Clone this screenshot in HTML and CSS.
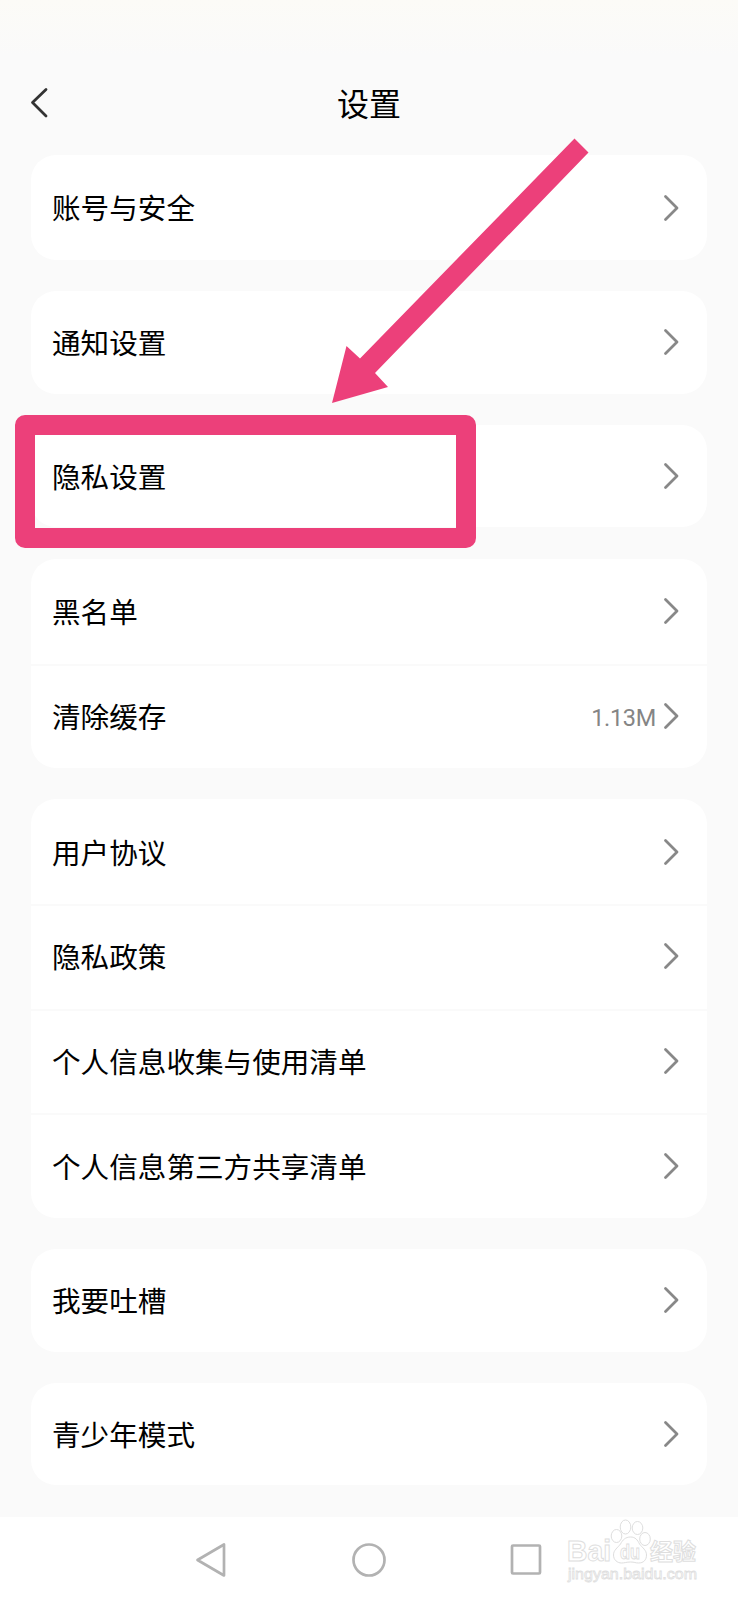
FILE: index.html
```html
<!DOCTYPE html>
<html lang="zh-CN">
<head>
<meta charset="utf-8">
<title>设置</title>
<link rel="stylesheet" href="styles.css">
</head>
<body>
<svg class="defs" aria-hidden="true"><symbol id="chev" viewBox="0 0 17 28"><path d="M2.5 2.5 14 14 2.5 25.5"/></symbol></svg>
<div class="screen">
  <div class="status"></div>
  <header class="header">
    <svg class="back" viewBox="0 0 20 32"><path d="M17 2.500 3.500 15.500 17 29"/></svg>
    <h1 class="title">设置</h1>
  </header>
  <main class="list">
    <section class="card first"><div class="row"><span class="label">账号与安全</span><svg class="chev"><use href="#chev"/></svg></div></section>
    <section class="card"><div class="row"><span class="label">通知设置</span><svg class="chev"><use href="#chev"/></svg></div></section>
    <section class="card"><div class="row"><span class="label">隐私设置</span><svg class="chev"><use href="#chev"/></svg></div></section>
    <section class="card group spaced">
      <div class="row"><span class="label">黑名单</span><svg class="chev"><use href="#chev"/></svg></div>
      <div class="row"><span class="label">清除缓存</span><span class="value">1.13M</span><svg class="chev"><use href="#chev"/></svg></div>
    </section>
    <section class="card group">
      <div class="row"><span class="label">用户协议</span><svg class="chev"><use href="#chev"/></svg></div>
      <div class="row"><span class="label">隐私政策</span><svg class="chev"><use href="#chev"/></svg></div>
      <div class="row"><span class="label">个人信息收集与使用清单</span><svg class="chev"><use href="#chev"/></svg></div>
      <div class="row"><span class="label">个人信息第三方共享清单</span><svg class="chev"><use href="#chev"/></svg></div>
    </section>
    <section class="card"><div class="row"><span class="label">我要吐槽</span><svg class="chev"><use href="#chev"/></svg></div></section>
    <section class="card"><div class="row"><span class="label">青少年模式</span><svg class="chev"><use href="#chev"/></svg></div></section>
  </main>
  <nav class="nav">
    <svg class="nav-icon" viewBox="0 0 36 36"><path d="M30 2.500v31L3.500 18z"/></svg>
    <svg class="nav-icon" viewBox="0 0 36 36"><circle cx="18" cy="18" r="15.500"/></svg>
    <svg class="nav-icon" viewBox="0 0 36 36"><rect x="4" y="3.500" width="28" height="28" rx="1"/></svg>
  </nav>
  <div class="highlight"></div>
  <svg class="arrow" viewBox="0 0 260 268"><path d="M2 267 16.500 210 30 222.500 244.500 2.500 258.500 16.500 45 237 58 251z"/></svg>
  <svg class="mark" viewBox="0 0 142 70">
    <text class="brand" x="7" y="43" textLength="44" lengthAdjust="spacingAndGlyphs">Bai</text>
    <g class="paw">
      <ellipse cx="56.500" cy="18" rx="5.300" ry="6.500"/>
      <ellipse cx="65.500" cy="9" rx="5.300" ry="7"/>
      <ellipse cx="77.500" cy="10" rx="5.300" ry="6.500"/>
      <ellipse cx="85" cy="21" rx="5.300" ry="6.500"/>
      <path d="M70.500 19c-5 0-8 3-10 7-3 4-7 6-7 11 0 5 4 8 8 8 3 0 5-1 9-1s5 1 8 1c5 0 8-3 8-8 0-5-4-7-7-11-2-4-4-7-9-7z"/>
    </g>
    <text class="du" x="60" y="41" textLength="20" lengthAdjust="spacingAndGlyphs">du</text>
    <text class="cn" x="90" y="42" textLength="46">经验</text>
    <text class="url" x="8" y="61" textLength="129" lengthAdjust="spacingAndGlyphs">jingyan.baidu.com</text>
  </svg>
</div>
</body>
</html>
```
FILE: styles.css
```css
* { box-sizing: border-box; }
body {
  margin: 0;
  background: #fafafa;
  color: #000;
  font-family: "Noto Sans CJK SC", sans-serif;
}
.defs { position: absolute; width: 0; height: 0; }
.screen {
  position: relative;
  width: 738px;
  height: 1600px;
  display: flex;
  flex-direction: column;
  overflow: hidden;
}
.status {
  height: 56px;
  flex: none;
  background: linear-gradient(#fcfbf7, #fafafa);
}
.header {
  height: 99px;
  flex: none;
  display: grid;
  grid-template-columns: 60px 1fr 60px;
  padding-bottom: 6px;
  align-items: center;
}
.back {
  width: 20px;
  height: 32px;
  margin-left: 29px;
  fill: none;
  stroke: #333;
  stroke-width: 2.8;
  stroke-linecap: round;
  stroke-linejoin: round;
}
.title {
  margin: 0;
  padding-bottom: 2px;
  font-size: 32px;
  line-height: 46px;
  font-weight: 400;
  text-align: center;
}
.list {
  flex: 1;
  display: flex;
  flex-direction: column;
  gap: 31px;
  padding: 0 31px;
}
.card {
  flex: none;
  background: #fff;
  border-radius: 25px;
}
.row {
  height: 102.5px;
  display: flex;
  align-items: center;
  padding: 0 27px 0 21px;
}
.first .row { height: 105px; }
.first .label { padding-bottom: 2px; }
.group .row { height: 104.7px; }
.spaced { margin-top: 1px; }
.group .row + .row { box-shadow: inset 0 2px #fafafa; }
.label {
  flex: 1;
  font-size: 28.6px;
  line-height: 42px;
}
.value {
  margin-right: 7px;
  padding-top: 4px;
  color: #858585;
  font-family: Roboto, sans-serif;
  font-size: 23.5px;
  letter-spacing: -0.3px;
}
.chev {
  width: 17px;
  height: 28px;
  fill: none;
  stroke: #888;
  stroke-width: 2.8;
  stroke-linecap: round;
  stroke-linejoin: round;
}
.nav {
  height: 83px;
  flex: none;
  display: flex;
  gap: 121px;
  padding: 25px 0 0 194px;
  background: #fff;
}
.nav-icon {
  width: 36px;
  height: 36px;
  fill: none;
  stroke: #b2b2b2;
  stroke-width: 2.7;
  stroke-linejoin: round;
}
.highlight {
  position: absolute;
  left: 15px;
  top: 415px;
  width: 461px;
  height: 133px;
  border: 20px solid #ec407a;
  border-radius: 10px;
}
.arrow {
  position: absolute;
  left: 330px;
  top: 136px;
  width: 260px;
  height: 268px;
  fill: #ec407a;
}
.mark {
  position: absolute;
  left: 560px;
  top: 1518px;
  width: 142px;
  height: 70px;
  fill: #fff;
  stroke: #dedede;
  stroke-width: 1;
  font-family: "Liberation Sans", sans-serif;
  font-weight: 700;
}
.brand { font-size: 30px; }
.du { font-size: 21px; }
.cn { font-family: "Noto Sans CJK SC", sans-serif; font-size: 23px; }
.url { font-size: 15.5px; stroke-width: 0.8; font-weight: 400; }
```
